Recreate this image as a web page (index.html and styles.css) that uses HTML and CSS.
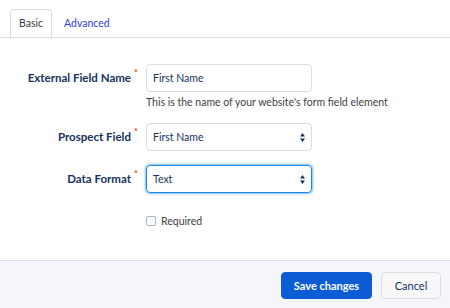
FILE: index.html
```html
<!DOCTYPE html>
<html>
<head>
<meta charset="utf-8">
<link rel="stylesheet" href="styles.css">
</head>
<body>
<div class="page">
  <div class="tabs">
    <div class="tab active">Basic</div>
    <div class="tab">Advanced</div>
  </div>
  <div class="form">
    <div class="row">
      <label class="label">External Field Name<span class="req">*</span></label>
      <div class="field">
        <div class="input">First Name</div>
        <div class="help">This is the name of your website's form field element</div>
      </div>
    </div>
    <div class="row">
      <label class="label">Prospect Field<span class="req">*</span></label>
      <div class="field">
        <div class="input select">First Name
          <svg class="arrows" width="5" height="9" viewBox="0 0 5 9"><path d="M2.5 0 L5 3.6 L0 3.6 Z M2.5 9 L5 5.4 L0 5.4 Z" fill="#16325c"/></svg>
        </div>
      </div>
    </div>
    <div class="row">
      <label class="label">Data Format<span class="req">*</span></label>
      <div class="field">
        <div class="input select focus">Text
          <svg class="arrows" width="5" height="9" viewBox="0 0 5 9"><path d="M2.5 0 L5 3.6 L0 3.6 Z M2.5 9 L5 5.4 L0 5.4 Z" fill="#16325c"/></svg>
        </div>
      </div>
    </div>
    <div class="row check-row">
      <div class="label"></div>
      <div class="field check">
        <span class="box"></span><span class="check-label">Required</span>
      </div>
    </div>
  </div>
  <div class="footer">
    <button class="btn primary">Save changes</button>
    <button class="btn neutral">Cancel</button>
  </div>
</div>
</body>
</html>
```

FILE: styles.css
```css
html, body {
  margin: 0;
  padding: 0;
  background: #fff;
}
body {
  font-family: Lato, "Open Sans", sans-serif;
  color: #16325c;
  width: 450px;
  height: 308px;
  overflow: hidden;
}
.page {
  display: flex;
  flex-direction: column;
  height: 308px;
}
.tabs {
  display: flex;
  padding: 9px 0 0 10px;
  border-bottom: 1px solid #d8dde6;
  height: 28px;
}
.tab {
  font-size: 10.5px;
  line-height: 28px;
  color: #3a3ad0;
  padding: 0 12px;
}
.tab.active {
  color: #3e3e3c;
  border: 1px solid #d8dde6;
  border-bottom: 1px solid #fff;
  border-radius: 4px 4px 0 0;
  margin-bottom: -1px;
  padding: 0 8px;
  height: 28px;
  line-height: 27px;
}
.form {
  flex: 1;
  padding-top: 26px;
}
.row {
  display: flex;
  margin-bottom: 14px;
}
.label {
  flex: none;
  text-align: right;
  font-size: 11.5px;
  font-weight: bold;
  color: #16325c;
  line-height: 28px;
  position: relative;
  padding-right: 15px;
  box-sizing: border-box;
  width: 146px;
}
.req {
  color: #e4572e;
  font-size: 10px;
  position: absolute;
  right: 8px;
  top: -6px;
}
.field {
  width: 166px;
}
.input {
  box-sizing: border-box;
  height: 28px;
  border: 1px solid #d8dde6;
  border-radius: 4px;
  font-size: 10.5px;
  line-height: 26px;
  padding: 0 6px;
  color: #16325c;
  position: relative;
}
.select .arrows {
  position: absolute;
  right: 6px;
  top: 8.5px;
}
.focus {
  border-color: #1589ee;
  box-shadow: 0 0 3px #0070d2;
}
.help {
  font-size: 10.5px;
  color: #3e3e3c;
  white-space: nowrap;
  margin-top: 3px;
  line-height: 14px;
}
.row.check-row {
  margin-top: 23px;
}
.check {
  display: flex;
  align-items: center;
  height: 10px;
}
.box {
  width: 8px;
  height: 8px;
  border: 1px solid #a8b7c7;
  border-radius: 2px;
  margin-right: 5px;
}
.check-label {
  font-size: 10.5px;
  color: #3e3e3c;
}
.footer {
  flex: none;
  height: 48px;
  box-sizing: border-box;
  border-top: 1px solid #d8dde6;
  background: #f4f6f9;
  display: flex;
  justify-content: flex-end;
  align-items: flex-start;
  padding: 11px 9px 0 0;
  gap: 9px;
}
.btn {
  font-family: Lato, "Open Sans", sans-serif;
  font-size: 11px;
  height: 27px;
  border-radius: 4px;
  padding: 0;
  white-space: nowrap;
  cursor: pointer;
}
.primary {
  background: #0b5cd5;
  border: 1px solid #0b5cd5;
  color: #fff;
  font-weight: bold;
  width: 91px;
}
.neutral {
  background: #f8f8f8;
  border: 1px solid #d8dde6;
  color: #16325c;
  width: 60px;
}
```
